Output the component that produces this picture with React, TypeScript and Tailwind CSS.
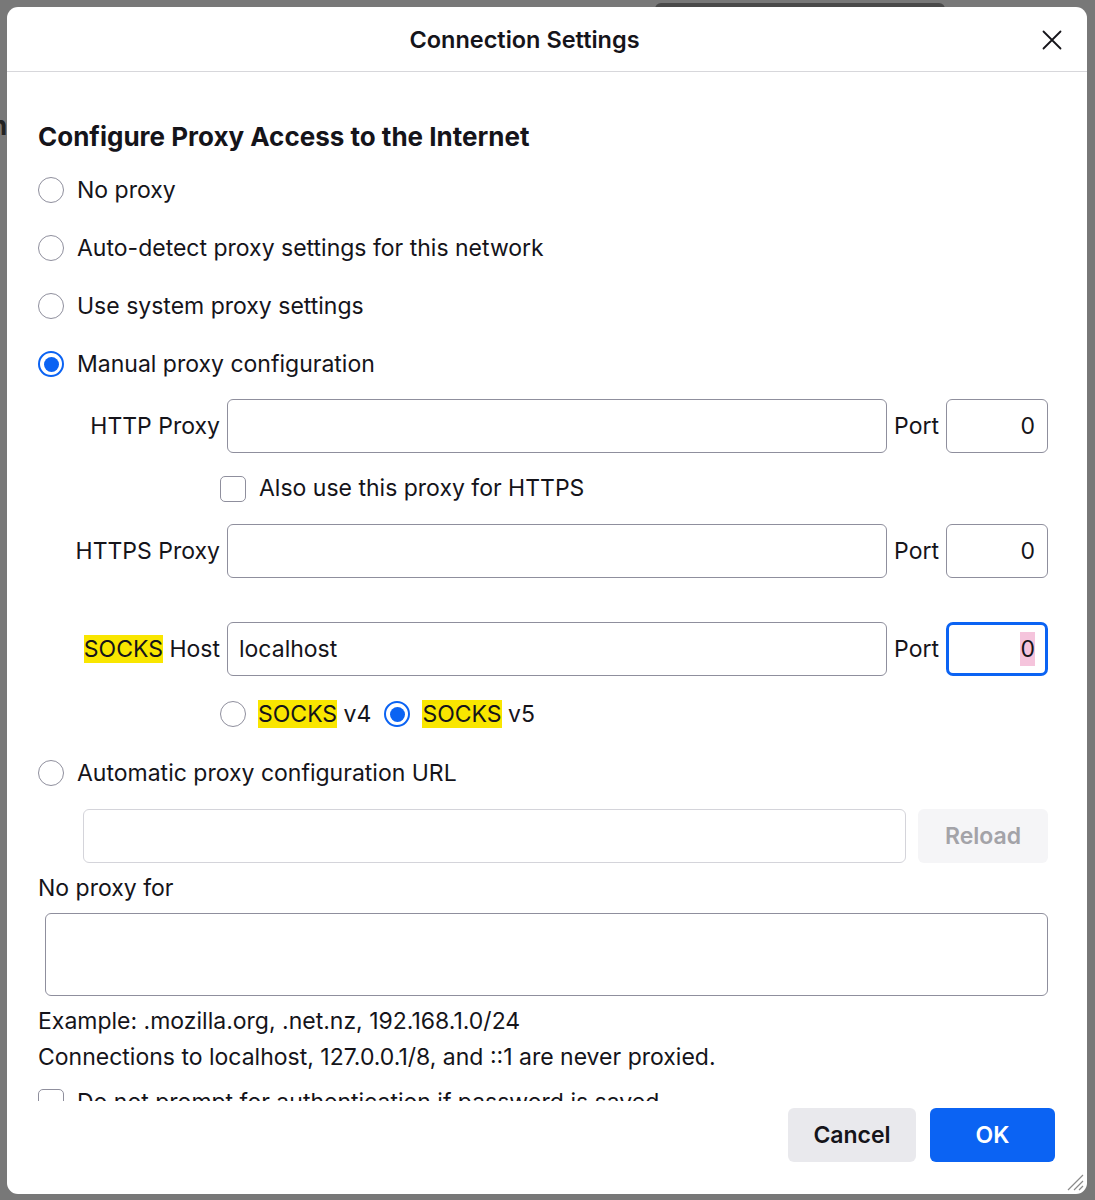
import React from "react";

const font = { fontFamily: "Inter, 'Noto Sans', sans-serif" };

function Radio({ checked }: { checked?: boolean }) {
  if (checked) {
    return (
      <span className="w-[26px] h-[26px] shrink-0 rounded-full border-[2.5px] border-[#0b63f3] bg-white flex items-center justify-center">
        <span className="w-[15px] h-[15px] rounded-full bg-[#0b63f3]" />
      </span>
    );
  }
  return <span className="w-[26px] h-[26px] shrink-0 rounded-full border-[1.5px] border-[#8f8f9d] bg-white" />;
}

function Checkbox() {
  return <span className="w-[26px] h-[26px] shrink-0 rounded-[5px] border-[1.5px] border-[#8f8f9d] bg-white" />;
}

function Hl({ children }: { children: React.ReactNode }) {
  return <span className="bg-[#f9e600]">{children}</span>;
}

function RadioRow({ label, checked }: { label: string; checked?: boolean }) {
  return (
    <div className="h-[58px] flex items-center gap-[13px]">
      <Radio checked={checked} />
      <span>{label}</span>
    </div>
  );
}

function ProxyRow({ label, value, focused, className = "" }: any) {
  return (
    <div className={`flex items-center h-[54px] gap-[7px] ${className}`}>
      <div className="w-[182px] text-right whitespace-nowrap">{label}</div>
      <div className="flex-1 h-full rounded-[6px] border border-[#8f8f9d] flex items-center px-[11px]">
        {value}
      </div>
      <span>Port</span>
      <div
        className={`w-[102px] h-full flex items-center justify-end ${
          focused
            ? "rounded-[7px] border-[3px] border-[#0b63f3] pr-[10px]"
            : "rounded-[6px] border border-[#8f8f9d] pr-[12px]"
        }`}
      >
        <span className={focused ? "bg-[#f5c4dc]" : ""}>0</span>
      </div>
    </div>
  );
}

export default function App() {
  return (
    <div className="relative w-[1095px] h-[1200px] bg-[#787878] pl-[7px] pr-[8px] pt-[7px] pb-[6px] overflow-hidden text-[#15141a]" style={font}>
      {/* window peeking behind */}
      <div className="absolute left-[655px] top-[3px] w-[290px] h-[10px] rounded-t-[6px] bg-[#4a4a4a]" />
      <span className="absolute left-[-9px] top-[106px] text-[26px] font-bold text-[#222]">n</span>

      <div className="relative h-full bg-white rounded-[11px] flex flex-col overflow-hidden">
        {/* HEADER */}
        <header className="relative h-[65px] shrink-0 border-b border-[#d7d7db] flex items-center justify-center">
          <h1 className="text-[23.5px] font-semibold pt-[2px] mr-[45px]">Connection Settings</h1>
          <button className="absolute right-[24px] top-[22px] w-[22px] h-[22px] flex items-center justify-center">
            <svg width="22" height="22" viewBox="0 0 22 22" fill="none" stroke="#15141a" strokeWidth="1.8" strokeLinecap="round">
              <path d="M2.5 2.5 L19.5 19.5 M19.5 2.5 L2.5 19.5" />
            </svg>
          </button>
        </header>

        {/* CONTENT */}
        <div className="h-[1029px] shrink-0 overflow-hidden pl-[31px] pr-[39px] pt-[45px] text-[23px]">
          <h2 className="h-[40px] leading-[40px] text-[26px] font-bold">Configure Proxy Access to the Internet</h2>
          <div className="h-[4px]" />
          <RadioRow label="No proxy" />
          <RadioRow label="Auto-detect proxy settings for this network" />
          <RadioRow label="Use system proxy settings" />
          <RadioRow label="Manual proxy configuration" checked />

          <ProxyRow label="HTTP Proxy" className="mt-[6px]" />
          <div className="h-[71px] flex items-center gap-[13px] pl-[182px]">
            <Checkbox />
            <span>Also use this proxy for HTTPS</span>
          </div>
          <ProxyRow label="HTTPS Proxy" />
          <ProxyRow
            label={
              <>
                <Hl>SOCKS</Hl> Host
              </>
            }
            value="localhost"
            focused
            className="mt-[44px]"
          />
          <div className="mt-[14px] h-[48px] flex items-center pl-[182px]">
            <Radio />
            <span className="ml-[12px]">
              <Hl>SOCKS</Hl> v4
            </span>
            <span className="ml-[13px]">
              <Radio checked />
            </span>
            <span className="ml-[12px]">
              <Hl>SOCKS</Hl> v5
            </span>
          </div>

          <div className="mt-[11px] h-[48px] flex items-center gap-[13px]">
            <Radio />
            <span>Automatic proxy configuration URL</span>
          </div>
          <div className="mt-[12px] h-[54px] flex gap-[12px] pl-[45px]">
            <div className="flex-1 rounded-[6px] border border-[#d4d4da]" />
            <button className="w-[130px] rounded-[6px] bg-[#f5f5f7] text-[#a3a3a8] font-semibold">Reload</button>
          </div>

          <div className="h-[50px] flex items-center">No proxy for</div>
          <div className="ml-[7px] h-[83px] rounded-[6px] border border-[#8f8f9d]" />

          <div className="mt-[7px] h-[36px] flex items-center">Example: .mozilla.org, .net.nz, 192.168.1.0/24</div>
          <div className="h-[36px] flex items-center">Connections to localhost, 127.0.0.1/8, and ::1 are never proxied.</div>
          <div className="mt-[14px] flex items-start gap-[13px]">
            <Checkbox />
            <span className="leading-[26px]">Do not prompt for authentication if password is saved</span>
          </div>
        </div>

        {/* FOOTER */}
        <footer className="flex-1 flex items-start justify-end gap-[14px] pr-[32px] pt-[7px] text-[23px] font-semibold">
          <button className="w-[128px] h-[54px] rounded-[6px] bg-[#e9e9ed]">Cancel</button>
          <button className="w-[125px] h-[54px] rounded-[6px] bg-[#0b63f3] text-white">OK</button>
        </footer>

        {/* resize grip */}
        <svg className="absolute right-[3px] bottom-[3px]" width="20" height="20" viewBox="0 0 20 20" stroke="#8a8a8a" strokeWidth="1.2">
          <path d="M19 4 L4 19 M19 10 L10 19 M19 15 L15 19" />
        </svg>
      </div>
    </div>
  );
}
